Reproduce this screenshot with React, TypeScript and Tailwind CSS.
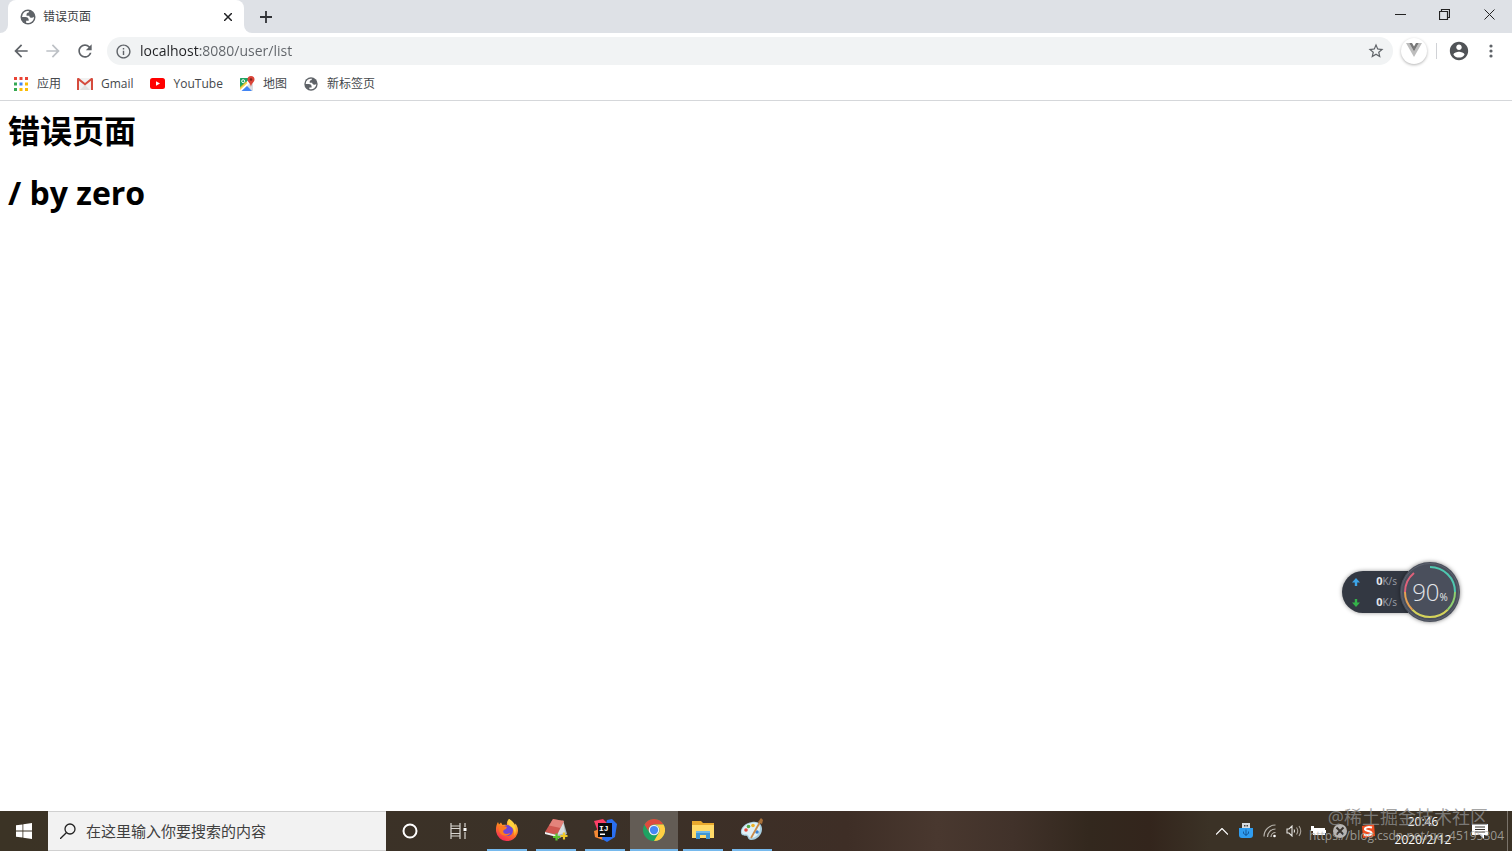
import type { ReactNode } from "react";

const GlobeIcon = () => (
  <svg viewBox="0 0 24 24" className="size-[18px]">
    <circle cx="12" cy="12" r="10" fill="#5f6368" />
    <path
      fill="#fff"
      d="M4 12h4.4c3.407.022 4.922 1.73 4.543 5.127H9.488v2.47a8.004 8.004 0 0 0 10.498-8.083C19.327 12.504 18.332 13 17 13c-2.137 0-3.206-.916-3.206-2.75h-3.748c-.274-2.728.683-4.092 2.87-4.092 0-.975.327-1.597.811-1.970A8.004 8.004 0 0 0 4 12z"
    />
  </svg>
);

const AppsIcon = () => (
  <svg viewBox="0 0 14 14" className="size-[14px]">
    <path fill="#ea4335" d="M0 0h3v3H0zM5.5 0h3v3h-3zM11 0h3v3h-3z" />
    <path fill="#34a853" d="M0 5.5h3v3H0z" />
    <path fill="#4285f4" d="M5.5 5.5h3v3h-3z" />
    <path fill="#fbbc05" d="M11 5.5h3v3h-3zM5.5 11h3v3h-3zM11 11h3v3h-3z" />
    <path fill="#34a853" d="M0 11h3v3H0z" />
  </svg>
);

const GmailIcon = () => (
  <svg viewBox="0 0 16 12" className="h-3 w-4">
    <path fill="#f1f1f1" d="M1 0h14v12H1z" />
    <path fill="#e0e0e0" d="M3 12l5-5 5 5z" />
    <path fill="#d54b3d" d="M0 1.2C0 .5.5 0 1.2 0h.6L8 5 14.2 0h.6c.7 0 1.2.5 1.2 1.2V12h-2V2.8L8 7.5 2 2.8V12H0z" />
  </svg>
);

const YouTubeIcon = () => (
  <svg viewBox="0 0 15 11" className="h-[11px] w-[15px]">
    <rect width="15" height="11" rx="2.5" fill="#f00" />
    <path fill="#fff" d="M6 3.2v4.6l4-2.3z" />
  </svg>
);

const MapsIcon = () => (
  <svg viewBox="0 0 16 16" className="size-4">
    <rect x="1" y="2" width="13" height="13" rx="1" fill="#dadce0" />
    <path fill="#1fa463" d="M1 3c0-.6.4-1 1-1h9L1 13z" />
    <path fill="#fff" d="M1 12L12 2l2 2L3 15H1z" />
    <path fill="#4285f4" d="M2.5 15l5.5-5 5 5z" />
    <path fill="#fbbc04" d="M1 11l6-5.5 1.5 1.5L1 14z" opacity=".7" />
    <circle cx="4.2" cy="5.2" r="1.5" fill="none" stroke="#fff" />
    <path fill="#db4437" d="M12 0a3.5 3.5 0 0 0-3.5 3.5C8.500 6 11.500 7 12 11c.5-4 3.500-5 3.500-7.500A3.500 3.500 0 0 0 12 0z" />
    <circle cx="12" cy="3.5" r="1.2" fill="#7b231e" />
  </svg>
);

const bookmarks: { label: string; icon: ReactNode }[] = [
  { label: "应用", icon: <AppsIcon /> },
  { label: "Gmail", icon: <GmailIcon /> },
  { label: "YouTube", icon: <YouTubeIcon /> },
  { label: "地图", icon: <MapsIcon /> },
  { label: "新标签页", icon: <GlobeIcon /> },
];

const TabStrip = () => (
  <div className="flex h-[33px] bg-[#dee1e6]">
    <div className="flex w-2 bg-white">
      <div className="flex-1 rounded-br-lg bg-[#dee1e6]" />
    </div>
    <div className="flex w-[236px] items-center rounded-t-lg bg-white pr-2 pl-[11px]">
      <GlobeIcon />
      <span className="ml-1.5 flex-1 text-xs text-[#3c4043]">错误页面</span>
      <button aria-label="关闭标签页" className="flex size-4 items-center justify-center">
        <svg viewBox="0 0 8 8" className="size-2" stroke="#202124" strokeWidth="1.5">
          <path d="M0 0l8 8M8 0L0 8" />
        </svg>
      </button>
    </div>
    <div className="flex flex-1 bg-white">
      <div className="flex flex-1 items-center rounded-bl-lg bg-[#dee1e6]">
        <button aria-label="打开新的标签页" className="ml-2 flex size-7 items-center justify-center">
          <svg viewBox="0 0 12 12" className="size-3" stroke="#303236" strokeWidth="1.8">
            <path d="M6 0v12M0 6h12" />
          </svg>
        </button>
        <div className="ml-auto flex h-[29px] self-start">
          <button aria-label="最小化" className="flex w-11 items-center justify-center">
            <svg viewBox="0 0 11 11" className="size-[11px]" stroke="#222" fill="none">
              <path d="M0 5.5h11" />
            </svg>
          </button>
          <button aria-label="还原" className="flex w-11 items-center justify-center">
            <svg viewBox="0 0 11 11" className="size-[11px]" stroke="#222" fill="none" strokeWidth="1.2">
              <path d="M.5 2.5h8v8h-8zM2.5 2.5v-2h8v8h-2" />
            </svg>
          </button>
          <button aria-label="关闭" className="flex w-[46px] items-center justify-center">
            <svg viewBox="0 0 11 11" className="size-[11px]" stroke="#222" fill="none">
              <path d="M.5.5l10 10M10.5.5l-10 10" />
            </svg>
          </button>
        </div>
      </div>
    </div>
  </div>
);

const Toolbar = () => (
  <div className="flex h-9 items-center px-[5px]">
    <button aria-label="后退" className="flex size-8 items-center justify-center">
      <svg viewBox="0 0 24 24" className="size-5" fill="#5f6368">
        <path d="M20 11H7.830l5.590-5.590L12 4l-8 8 8 8 1.410-1.410L7.830 13H20v-2z" />
      </svg>
    </button>
    <button aria-label="前进" className="flex size-8 items-center justify-center">
      <svg viewBox="0 0 24 24" className="size-5" fill="#bdc1c6">
        <path d="M12 4l-1.410 1.410L16.170 11H4v2h12.170l-5.580 5.590L12 20l8-8z" />
      </svg>
    </button>
    <button aria-label="重新加载" className="flex size-8 items-center justify-center">
      <svg viewBox="0 0 24 24" className="size-5" fill="#5f6368">
        <path d="M17.650 6.350A7.958 7.958 0 0 0 12 4c-4.420 0-7.990 3.580-7.990 8s3.570 8 7.990 8c3.730 0 6.840-2.550 7.730-6h-2.080A5.990 5.990 0 0 1 12 18c-3.310 0-6-2.690-6-6s2.690-6 6-6c1.660 0 3.140.690 4.220 1.780L13 11h7V4l-2.350 2.350z" />
      </svg>
    </button>
    <div className="ml-1.5 flex h-7 flex-1 items-center rounded-full bg-[#f1f3f4] pr-2 pl-2">
      <svg viewBox="0 0 24 24" className="size-[17px]" fill="#5f6368">
        <path d="M11 17h2v-6h-2v6zm1-15C6.480 2 2 6.480 2 12s4.480 10 10 10 10-4.480 10-10S17.520 2 12 2zm0 18c-4.410 0-8-3.590-8-8s3.590-8 8-8 8 3.590 8 8-3.590 8-8 8zM11 9h2V7h-2v2z" />
      </svg>
      <input
        type="text"
        aria-label="地址和搜索栏"
        defaultValue="localhost:8080/user/list"
        className="ml-2 h-6 min-w-0 flex-1 bg-[linear-gradient(90deg,#202124_60px,#5f6368_60px)] bg-clip-text pb-0.5 text-sm text-transparent caret-black outline-none"
      />
      <button aria-label="为此页添加书签">
        <svg viewBox="0 0 24 24" className="size-[18px]" fill="#5f6368">
          <path d="M22 9.240l-7.190-.620L12 2 9.190 8.630 2 9.240l5.460 4.730L5.820 21 12 17.270 18.180 21l-1.630-7.030L22 9.240zM12 15.400l-3.760 2.270 1-4.280-3.320-2.880 4.380-.380L12 6.100l1.710 4.040 4.380.380-3.320 2.880 1 4.280L12 15.400z" />
        </svg>
      </button>
    </div>
    <button aria-label="Vue.js devtools" className="ml-2 flex size-[26px] items-center justify-center rounded-full bg-white shadow-[0_1px_3px_#0000004d]">
      <svg viewBox="0 0 16 14" className="mb-0.5 h-[14px] w-4">
        <path fill="#bdbdbd" d="M0 0h3.2L8 8.4 12.8 0H16L8 14z" />
        <path fill="#777" d="M3.2 0H6l2 3.5L10 0h2.8L8 8.4z" />
      </svg>
    </button>
    <div className="ml-[9px] h-4 w-px bg-[#d0d2d6]" />
    <button aria-label="用户" className="ml-2.5 flex size-6 items-center justify-center">
      <svg viewBox="0 0 24 24" className="size-[22px]" fill="#505357">
        <path d="M12 2C6.480 2 2 6.480 2 12s4.480 10 10 10 10-4.480 10-10S17.520 2 12 2zm0 3c1.660 0 3 1.340 3 3s-1.340 3-3 3-3-1.340-3-3 1.340-3 3-3zm0 14.200c-2.500 0-4.710-1.280-6-3.220.030-1.990 4-3.080 6-3.080 1.990 0 5.970 1.090 6 3.080-1.290 1.940-3.500 3.220-6 3.220z" />
      </svg>
    </button>
    <button aria-label="自定义及控制" className="ml-1 flex size-8 items-center justify-center">
      <svg viewBox="0 0 4 14" className="h-[14px] w-1" fill="#5f6368">
        <circle cx="2" cy="2" r="1.6" />
        <circle cx="2" cy="7" r="1.6" />
        <circle cx="2" cy="12" r="1.6" />
      </svg>
    </button>
  </div>
);

const BookmarksBar = () => (
  <nav className="flex h-8 items-center gap-4 border-b border-[#d5d7da] pb-0.5 pl-[13px]">
    {bookmarks.map((bookmark) => (
      <a key={bookmark.label} href="#" className="flex items-center text-xs text-[#45484c]">
        <span className="flex w-4 justify-center">{bookmark.icon}</span>
        <span className="ml-2">{bookmark.label}</span>
      </a>
    ))}
  </nav>
);

const SpeedWidget = () => (
  <div className="absolute right-[52px] bottom-[229px] flex items-center font-['Open_Sans',sans-serif] text-[#e4e6ea]">
    <div className="-mr-2 flex h-[42px] w-[66px] flex-col justify-center rounded-l-full bg-[#333842] pr-[11px] pl-2.5 shadow-[0_0_4px_#00000066]">
      <div className="flex h-[21px] items-center justify-between">
        <svg viewBox="0 0 8 8" className="size-2" fill="#3da5e8">
          <path d="M4 0l4 4.500H5.200V8H2.800V4.500H0z" />
        </svg>
        <span className="text-[11px] font-bold">
          0<span className="text-[10px] font-normal text-[#9a9fa8]">K/s</span>
        </span>
      </div>
      <div className="flex h-[21px] items-center justify-between">
        <svg viewBox="0 0 8 8" className="size-2" fill="#35b34a">
          <path d="M4 8L0 3.500h2.800V0h2.400v3.500H8z" />
        </svg>
        <span className="text-[11px] font-bold">
          0<span className="text-[10px] font-normal text-[#9a9fa8]">K/s</span>
        </span>
      </div>
    </div>
    <div className="relative flex size-[60px] items-center justify-center rounded-full bg-[#4a4f5c] shadow-[0_0_4px_#00000080]">
      <svg viewBox="0 0 60 60" className="absolute inset-0" fill="none" strokeWidth="2">
        <circle cx="30" cy="30" r="28.500" stroke="#5d626e" strokeWidth="1" />
        <path stroke="#4fc8b0" d="M30 5a25 25 0 0 1 25 25" />
        <path stroke="#8fd070" d="M55 30a25 25 0 0 1-7.300 17.700" />
        <path stroke="#d5d35b" d="M47.700 47.700A25 25 0 0 1 12.300 47.700" />
        <path stroke="#e6a052" d="M12.300 47.700A25 25 0 0 1 5 30" />
        <path stroke="#e0617a" d="M5 30a25 25 0 0 1 9-19" />
      </svg>
      <span className="text-2xl font-light">
        90<span className="text-[10px] font-normal">%</span>
      </span>
    </div>
  </div>
);

const FirefoxIcon = () => (
  <svg viewBox="0 0 24 24" className="size-6">
    <defs>
      <linearGradient id="fox" x1=".8" y1="0" x2=".3" y2="1">
        <stop offset="0" stopColor="#ffe14a" />
        <stop offset=".5" stopColor="#ff8020" />
        <stop offset="1" stopColor="#f5245c" />
      </linearGradient>
    </defs>
    <path fill="url(#fox)" d="M14 1c3 1.500 5 3.500 6 6l.5-1.500C23 9 23.500 12 22.500 15.500A11 11 0 0 1 1.200 14C.5 10 1.500 6.500 3 4l1 2.500L6 4.500l1.500 2.500c1.500-.5 3-.5 4.500 0C11.500 4.500 12.500 2.500 14 1z" />
    <circle cx="12.5" cy="12.500" r="5.500" fill="#7145d6" />
    <path fill="#ff7a20" d="M4 8c3 0 5-.5 8 1l-1 2c-2 .5-3.500 1.500-2.500 3.500s4 1.500 6.500.5C14 19 5 19 4 12z" />
    <path fill="#ffd23c" d="M14 1c7 5 8 11 5.500 17 .5-5-.5-7.500-4-9.500C12.500 6.500 12.500 3.500 14 1z" />
  </svg>
);

const NotebookIcon = () => (
  <svg viewBox="0 0 24 24" className="size-6">
    <path fill="#aeb8bb" d="M19 2l4 14-9 5-3-4z" />
    <path fill="#d8dedf" d="M19 3l2 12-8 2z" />
    <path fill="#cf5750" d="M9 1l11 2-7 14L1 14z" />
    <path fill="#eb958d" d="M9 1l11 2-3.500 7L5 7.500z" opacity=".7" />
    <path fill="#f2f2f2" d="M1 14l12 3v2L1 16z" />
    <path stroke="#59c22f" strokeWidth="2.2" d="M12.5 15.500v7M9 19h7" />
    <path stroke="#f0c928" strokeWidth="2.2" d="M20 14.500v7M16.500 18h7" />
  </svg>
);

const IdeaIcon = () => (
  <svg viewBox="0 0 24 24" className="size-6">
    <path fill="#fc4068" d="M1 3l9-2 5 5-3 15-10-2 2-8z" />
    <path fill="#f58a35" d="M1 13l6-2 3 11-8-3z" />
    <path fill="#2a6ff0" d="M14 2l5-1 5 5-2 13-8 5-5-3z" />
    <rect x="5" y="5" width="14" height="14" fill="#0b0b0d" />
    <text x="6" y="13" fill="#fff" fontSize="8" fontWeight="700" fontFamily="Liberation Mono, monospace">
      IJ
    </text>
    <path fill="#fff" d="M7 15.500h5V17H7z" />
  </svg>
);

const ChromeIcon = () => (
  <svg viewBox="0 0 24 24" className="size-[22px]">
    <circle cx="12" cy="12" r="12" fill="#1ea362" />
    <path fill="#dd4b3e" d="M1.6 6A12 12 0 0 1 22.400 6H12a6 6 0 0 0-5.200 9z" />
    <path fill="#ffce43" d="M22.400 6A12 12 0 0 1 12 24l5.200-9A6 6 0 0 0 12 6z" />
    <circle cx="12" cy="12" r="5.800" fill="#f1f1f1" />
    <circle cx="12" cy="12" r="4.500" fill="#4687f4" />
  </svg>
);

const FolderIcon = () => (
  <svg viewBox="0 0 24 20" className="h-5 w-6">
    <path fill="#e8a92e" d="M1 1h9l2 2h11v4H1z" />
    <path fill="#ffda68" d="M1 5h22v13H1z" />
    <path fill="#3f97d3" d="M5 11h14v8h-4v-4H9v4H5z" />
    <path fill="#6eb9ea" d="M5 11h14v2H5z" />
  </svg>
);

const PaintIcon = () => (
  <svg viewBox="0 0 24 24" className="size-6">
    <path fill="#a9cfe0" d="M12 4c6-1 10 2 10 7 0 6-5 11-11 11-3 0-3-3-4-4s-5 1-6-3C0 9 6 5 12 4z" />
    <path fill="#dff1f8" d="M12 5c5-1 8 1 8 5 0 5-4 10-9 10-2 0-2-2-3-3s-5 0-6-2C1 10 6 6 12 5z" />
    <circle cx="6" cy="12" r="1.800" fill="#e34a3b" />
    <circle cx="8.500" cy="8.500" r="1.800" fill="#52a845" />
    <circle cx="13" cy="7.500" r="1.800" fill="#f0b429" />
    <circle cx="17" cy="14" r="1.800" fill="#3b82d0" />
    <path stroke="#c98b4b" strokeWidth="1.800" d="M20 4l-9 16" />
    <path fill="#a9713a" d="M18 4l3-4 2 2-1 4z" />
  </svg>
);

const apps: { label: string; icon: ReactNode; active?: boolean }[] = [
  { label: "Firefox", icon: <FirefoxIcon /> },
  { label: "Notebook", icon: <NotebookIcon /> },
  { label: "IntelliJ IDEA", icon: <IdeaIcon /> },
  { label: "Google Chrome", icon: <ChromeIcon />, active: true },
  { label: "文件资源管理器", icon: <FolderIcon /> },
  { label: "画图", icon: <PaintIcon /> },
];

const SystemTray = () => (
  <div className="ml-auto flex items-center text-white">
    <button aria-label="显示隐藏的图标" className="flex w-6 justify-center">
      <svg viewBox="0 0 12 7" className="h-[7px] w-3" fill="none" stroke="#fff" strokeWidth="1.2">
        <path d="M0 6.500l6-6 6 6" />
      </svg>
    </button>
    <button aria-label="USB" className="flex w-6 justify-center">
      <svg viewBox="0 0 14 16" className="h-4 w-[14px]">
        <path fill="#d6dbe0" d="M3 0h8v6H3z" />
        <path fill="#444" d="M5 2h1.500v1.500H5zM7.500 2H9v1.500H7.500z" />
        <path fill="#2f9df0" d="M0 5h14v7a3 3 0 0 1-3 3H3a3 3 0 0 1-3-3z" />
        <path fill="none" stroke="#145a9c" d="M7 6.500V13M4.500 8.500v2L7 12l2.500-1.500v-2" />
      </svg>
    </button>
    <button aria-label="网络" className="flex w-6 justify-center">
      <svg viewBox="0 0 14 14" className="size-[14px]" fill="none" stroke="#b9b5ae" strokeWidth="1.2">
        <path d="M1 12.500A11.500 11.500 0 0 1 12.500 1M4.500 13A8 8 0 0 1 12.500 5M8 13a4.500 4.500 0 0 1 4.500-4.500" />
        <circle cx="11.500" cy="12" r="1.300" fill="#fff" stroke="none" />
      </svg>
    </button>
    <button aria-label="音量" className="flex w-6 justify-center">
      <svg viewBox="0 0 16 12" className="h-3 w-4" fill="none" stroke="#e8e6e2" strokeWidth="1.1">
        <path d="M1 4h2l3-3v10L3 8H1zM8 4.500q1 1.500 0 3" />
        <path stroke="#aaa49b" d="M10.500 2.500q2.500 3.500 0 7M13 1q3.500 5 0 10" />
      </svg>
    </button>
    <button aria-label="电源" className="flex w-6 justify-center">
      <svg viewBox="0 0 16 12" className="h-3 w-4" fill="#fff">
        <path d="M4 3h11v7H3V6H1V1h3z" />
        <path d="M15 5h1v3h-1z" />
      </svg>
    </button>
    <button aria-label="已断开" className="flex w-5 justify-center">
      <svg viewBox="0 0 14 14" className="size-[14px]">
        <circle cx="7" cy="7" r="7" fill="#b7b5b2" />
        <path stroke="#39342e" strokeWidth="2" d="M3.500 3.500l7 7M10.500 3.500l-7 7" />
      </svg>
    </button>
    <button aria-label="搜狗输入法" className="ml-2.5 flex w-4 justify-center">
      <svg viewBox="0 0 14 14" className="size-[14px]">
        <path fill="#f25022" d="M1 2l12-2 1 12-12 2z" />
        <path fill="none" stroke="#fff" strokeWidth="2" d="M11 3.500C7 2.500 3.500 3.500 4 5.500s6.500 1 6.500 3.500-4 2.500-7.500 1.500" />
      </svg>
    </button>
    <button className="ml-[15px] w-16 text-xs leading-[18px]">
      <span className="block">20:46</span>
      <span className="block">2020/2/12</span>
    </button>
    <button aria-label="通知" className="ml-[11px] flex w-7 justify-center">
      <svg viewBox="0 0 16 16" className="size-4">
        <path fill="#fff" d="M0 1h16v11h-4v4l-4-4H0z" />
        <path stroke="#39342e" d="M3 4h10M3 6.500h10M3 9h10" />
      </svg>
    </button>
    <button aria-label="显示桌面" className="ml-[13px] h-10 w-[5px] border-l border-[#7a736a]" />
  </div>
);

const Taskbar = () => (
  <footer className="relative flex h-10 items-center bg-[linear-gradient(90deg,#3b3325_0%,#3b3128_40%,#3e2e26_56%,#49382f_62%,#41322a_67%,#33281e_72%,#33251c_76%,#3b3226_80%,#3b3226_100%)]">
    <button aria-label="开始" className="flex h-10 w-12 items-center justify-center">
      <svg viewBox="0 0 16 16" className="size-4" fill="#fff">
        <path d="M0 2.300L6.500 1.400v6.200H0zM7.300 1.300L16 0v7.600H7.300zM0 8.400h6.500v6.200L0 13.700zM7.300 8.400H16V16l-8.700-1.300z" />
      </svg>
    </button>
    <label className="flex h-10 w-[338px] items-center border-y border-[#d0d0d0] bg-[#f2f2f2] pl-3">
      <svg viewBox="0 0 16 16" className="size-4" fill="none" stroke="#222" strokeWidth="1.3">
        <circle cx="10" cy="6" r="5" />
        <path d="M6.300 9.700L0 16" />
      </svg>
      <input
        type="text"
        aria-label="搜索"
        placeholder="在这里输入你要搜索的内容"
        className="ml-2.5 min-w-0 flex-1 text-[15px] outline-none placeholder:text-[#404040]"
      />
    </label>
    <button aria-label="Cortana" className="flex h-10 w-12 items-center justify-center">
      <svg viewBox="0 0 16 16" className="size-4" fill="none" stroke="#fff" strokeWidth="2">
        <circle cx="8" cy="8" r="6.500" />
      </svg>
    </button>
    <button aria-label="任务视图" className="flex h-10 w-12 items-center justify-center">
      <svg viewBox="0 0 17 16" className="h-4 w-[17px]" fill="none" stroke="#d8d5d0" strokeWidth="1.2">
        <path d="M1 0v3h9V0M1 16v-3h9v3M1 3v10M10 3v10M1 5.500h9M1 10.500h9M15 0v4M15 9v7" />
        <path fill="#fff" stroke="none" d="M13.500 5h3v3h-3z" />
      </svg>
    </button>
    <div className="ml-px flex gap-px">
      {apps.map((app) => (
        <button
          key={app.label}
          aria-label={app.label}
          className={`flex h-10 w-12 flex-col items-center ${app.active ? "bg-[#635c55]" : "px-1"}`}
        >
          <span className="flex flex-1 items-center">{app.icon}</span>
          <span className="h-0.5 w-full bg-[#76b9ed]" />
        </button>
      ))}
    </div>
    <SystemTray />
    <div className="pointer-events-none absolute right-2 bottom-1.5 text-right">
      <p className="mr-4 text-lg leading-5 text-[#8c8c8ccc]">@稀土掘金技术社区</p>
      <p className="text-xs leading-[18px] text-[#b4b2afcc]">https://blog.csdn.net/qq_45195304</p>
    </div>
  </footer>
);

const App = () => {
  return (
    <div className="relative flex min-h-screen flex-col bg-white font-['Open_Sans','Noto_Sans_CJK_SC',sans-serif]">
      <header>
        <TabStrip />
        <Toolbar />
        <BookmarksBar />
      </header>
      <main className="flex-1 px-2 pt-2 text-black">
        <h1 className="text-[32px] leading-[44px] font-bold">错误页面</h1>
        <h1 className="mt-[18px] text-[32px] leading-[44px] font-bold">/ by zero</h1>
      </main>
      <Taskbar />
      <SpeedWidget />
    </div>
  );
};

export default App;
